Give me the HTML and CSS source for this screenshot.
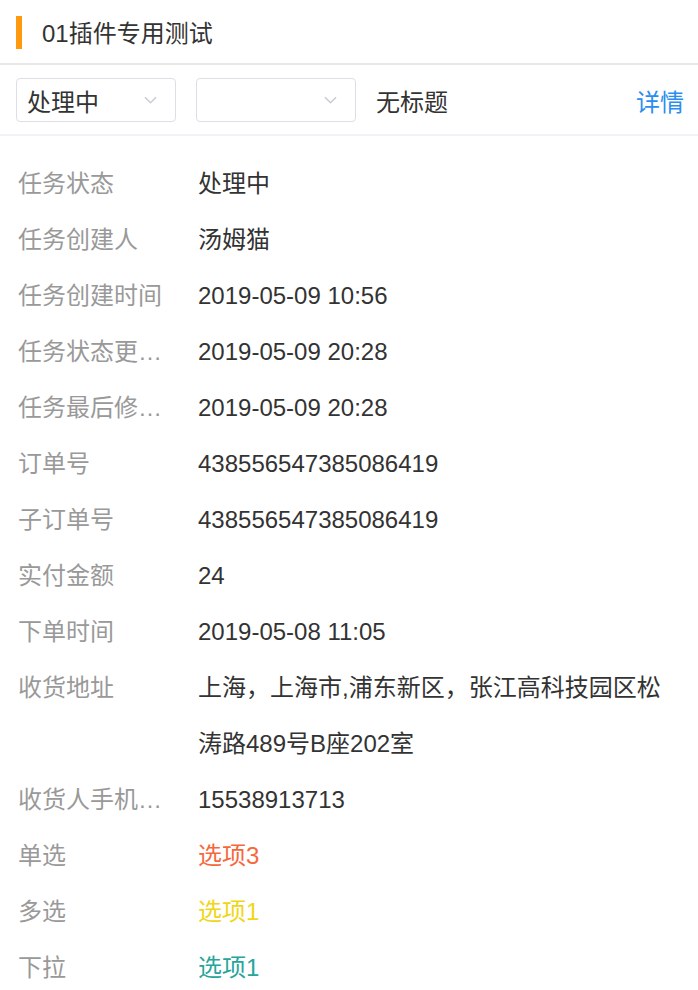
FILE: index.html
```html
<!DOCTYPE html>
<html>
  <head>
    <meta charset="utf-8">
    <title>01插件专用测试</title>
    <link rel="stylesheet" href="styles.css">
  </head>
  <body>
    <div class="header">
      <span class="header-bar"></span>
      <h1 class="title">01插件专用测试</h1>
    </div>

    <div class="filters">
      <div class="select">
        <span class="select-text">处理中</span>
        <svg class="chevron" viewBox="0 0 14 8"><path d="M1,1 L7,7 L13,1" /></svg>
      </div>
      <div class="select">
        <span class="select-text"></span>
        <svg class="chevron" viewBox="0 0 14 8"><path d="M1,1 L7,7 L13,1" /></svg>
      </div>
      <span class="filter-title">无标题</span>
      <a class="detail-link" href="#">详情</a>
    </div>

    <div class="fields">
      <div class="field"><div class="label">任务状态</div><div class="value">处理中</div></div>
      <div class="field"><div class="label">任务创建人</div><div class="value">汤姆猫</div></div>
      <div class="field"><div class="label">任务创建时间</div><div class="value">2019-05-09 10:56</div></div>
      <div class="field"><div class="label">任务状态更新时间</div><div class="value">2019-05-09 20:28</div></div>
      <div class="field"><div class="label">任务最后修改时间</div><div class="value">2019-05-09 20:28</div></div>
      <div class="field"><div class="label">订单号</div><div class="value">438556547385086419</div></div>
      <div class="field"><div class="label">子订单号</div><div class="value">438556547385086419</div></div>
      <div class="field"><div class="label">实付金额</div><div class="value">24</div></div>
      <div class="field"><div class="label">下单时间</div><div class="value">2019-05-08 11:05</div></div>
      <div class="field"><div class="label">收货地址</div><div class="value">上海，上海市,浦东新区，张江高科技园区松涛路489号B座202室</div></div>
      <div class="field"><div class="label">收货人手机号码</div><div class="value">15538913713</div></div>
      <div class="field"><div class="label">单选</div><div class="value value--orange">选项3</div></div>
      <div class="field"><div class="label">多选</div><div class="value value--yellow">选项1</div></div>
      <div class="field"><div class="label">下拉</div><div class="value value--teal">选项1</div></div>
    </div>
  </body>
</html>
```

FILE: styles.css
```css
body {
  margin: 0;
  font-family: "Liberation Sans", "Noto Sans CJK SC", sans-serif;
  font-size: 24px;
  color: #333;
  background: #fff;
}
.header {
  display: flex;
  align-items: center;
  height: 63px;
  padding: 0 16px;
  border-bottom: 2px solid #e8e8e8;
}
.header-bar {
  width: 6px;
  height: 33px;
  margin-top: 1px;
  background: #ff9a0e;
}
.title {
  margin: 0 0 0 20px;
  font-size: 24px;
  font-weight: normal;
  color: #333;
}
.filters {
  display: flex;
  align-items: center;
  gap: 20px;
  padding: 13px 14px 12px 16px;
  border-bottom: 2px solid #f0f2f5;
}
.select {
  display: flex;
  align-items: center;
  justify-content: space-between;
  box-sizing: border-box;
  width: 160px;
  height: 44px;
  padding: 0 18px 0 10px;
  border: 1px solid #dcdfe6;
  border-radius: 4px;
}
.chevron {
  width: 13px;
  height: 8px;
  fill: none;
  stroke: #c8ccd4;
  stroke-width: 1.6px;
}
.filter-title {
  flex: 1;
}
.detail-link {
  color: #2a8ef0;
  text-decoration: none;
}
.fields {
  padding: 20px 18px 0 18px;
}
.field {
  display: flex;
  line-height: 56px;
}
.label {
  flex: none;
  width: 160px;
  margin-right: 20px;
  color: #999;
  white-space: nowrap;
  overflow: hidden;
  text-overflow: ellipsis;
}
.value {
  flex: 1;
  color: #333;
}
.value--orange { color: #f5683c; }
.value--yellow { color: #efd616; }
.value--teal { color: #27a59b; }
```
